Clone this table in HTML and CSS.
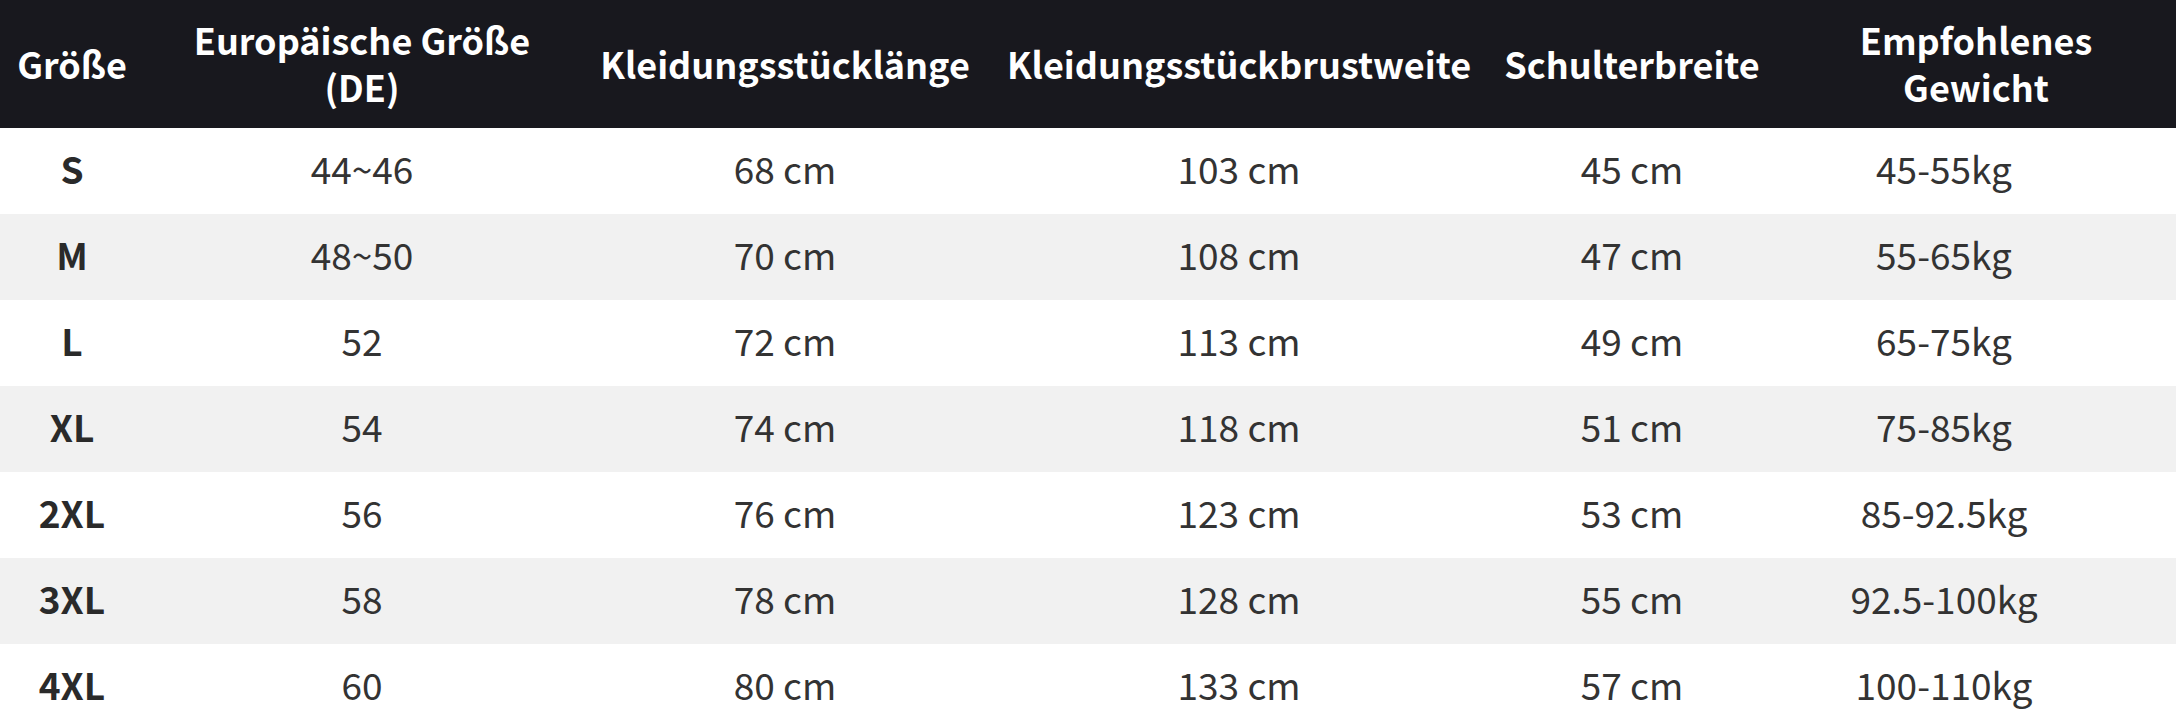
FILE: index.html
```html
<!DOCTYPE html>
<html lang="de">
<head>
<meta charset="utf-8">
<title>Größentabelle</title>
<link rel="stylesheet" href="styles.css">
</head>
<body>
<table class="size-table">
  <colgroup>
    <col class="c1"><col class="c2"><col class="c3"><col class="c4"><col class="c5"><col class="c6">
  </colgroup>
  <thead>
    <tr>
      <th>Größe</th>
      <th>Europäische Größe<br>(DE)</th>
      <th>Kleidungsstücklänge</th>
      <th>Kleidungsstückbrustweite</th>
      <th>Schulterbreite</th>
      <th>Empfohlenes<br>Gewicht</th>
    </tr>
  </thead>
  <tbody>
    <tr><td class="size">S</td><td>44~46</td><td>68 cm</td><td>103 cm</td><td>45 cm</td><td class="weight">45-55kg</td></tr>
    <tr><td class="size">M</td><td>48~50</td><td>70 cm</td><td>108 cm</td><td>47 cm</td><td class="weight">55-65kg</td></tr>
    <tr><td class="size">L</td><td>52</td><td>72 cm</td><td>113 cm</td><td>49 cm</td><td class="weight">65-75kg</td></tr>
    <tr><td class="size">XL</td><td>54</td><td>74 cm</td><td>118 cm</td><td>51 cm</td><td class="weight">75-85kg</td></tr>
    <tr><td class="size">2XL</td><td>56</td><td>76 cm</td><td>123 cm</td><td>53 cm</td><td class="weight">85-92.5kg</td></tr>
    <tr><td class="size">3XL</td><td>58</td><td>78 cm</td><td>128 cm</td><td>55 cm</td><td class="weight">92.5-100kg</td></tr>
    <tr><td class="size">4XL</td><td>60</td><td>80 cm</td><td>133 cm</td><td>57 cm</td><td class="weight">100-110kg</td></tr>
  </tbody>
</table>
</body>
</html>
```

FILE: styles.css
```css
html, body {
  margin: 0;
  padding: 0;
  background: #ffffff;
}

.size-table {
  width: 2176px;
  border-collapse: collapse;
  table-layout: fixed;
  font-family: "Noto Sans CJK SC", "Noto Sans", sans-serif;
}

.c1 { width: 144px; }
.c2 { width: 436px; }
.c3 { width: 410px; }
.c4 { width: 498px; }
.c5 { width: 288px; }
.c6 { width: 400px; }

.size-table thead tr {
  background: #18181e;
}

.size-table th {
  height: 126px;
  color: #ffffff;
  font-weight: 700;
  font-size: 36px;
  line-height: 47px;
  text-align: center;
  padding: 0 0 2px 0;
  white-space: nowrap;
}

.size-table td {
  height: 80px;
  padding: 0 0 6px 0;
  text-align: center;
  font-size: 37px;
  line-height: 48px;
  color: #333333;
  font-weight: 400;
}

.size-table td.size {
  font-weight: 700;
  color: #2a2a2a;
}

.size-table td.weight {
  padding-right: 64px;
}

.size-table tbody tr:nth-child(even) {
  background: #f1f1f1;
}
```
